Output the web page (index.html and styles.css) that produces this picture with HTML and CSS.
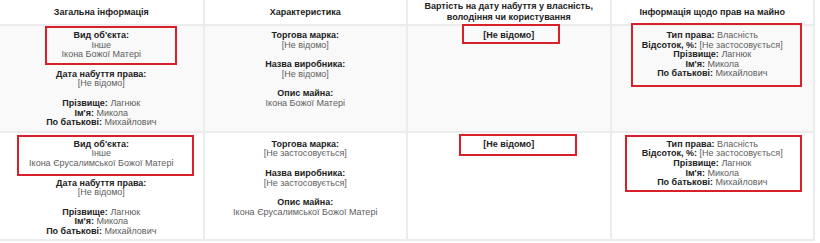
FILE: index.html
```html
<!DOCTYPE html>
<html lang="uk">
<head>
<meta charset="utf-8">
<title>Об'єкти</title>
<link rel="stylesheet" href="styles.css">
</head>
<body>
<div class="page">
  <table class="decl">
    <thead>
      <tr>
        <th>Загальна інформація</th>
        <th>Характеристика</th>
        <th>Вартість на дату набуття у власність,<br>володіння чи користування</th>
        <th>Інформація щодо прав на майно</th>
      </tr>
    </thead>
    <tbody>
      <tr class="row-a">
        <td>
          <div class="blk"><b>Вид об'єкта:</b><br><span class="v">Інше</span><br><span class="v">Ікона Божої Матері</span></div>
          <div class="blk"><b>Дата набуття права:</b><br><span class="v">[Не відомо]</span></div>
          <div class="blk"><b>Прізвище:</b> <span class="v">Лагнюк</span><br><b>Ім'я:</b> <span class="v">Микола</span><br><b>По батькові:</b> <span class="v">Михайлович</span></div>
        </td>
        <td>
          <div class="blk"><b>Торгова марка:</b><br><span class="v">[Не відомо]</span></div>
          <div class="blk"><b>Назва виробника:</b><br><span class="v">[Не відомо]</span></div>
          <div class="blk"><b>Опис майна:</b><br><span class="v">Ікона Божої Матері</span></div>
        </td>
        <td>
          <div class="blk"><b>[Не відомо]</b></div>
        </td>
        <td>
          <div class="blk"><b>Тип права:</b> <span class="v">Власність</span><br><b>Відсоток, %:</b> <span class="v">[Не застосовується]</span><br><b>Прізвище:</b> <span class="v">Лагнюк</span><br><b>Ім'я:</b> <span class="v">Микола</span><br><b>По батькові:</b> <span class="v">Михайлович</span></div>
        </td>
      </tr>
      <tr class="row-b">
        <td>
          <div class="blk"><b>Вид об'єкта:</b><br><span class="v">Інше</span><br><span class="v">Ікона Єрусалимської Божої Матері</span></div>
          <div class="blk"><b>Дата набуття права:</b><br><span class="v">[Не відомо]</span></div>
          <div class="blk"><b>Прізвище:</b> <span class="v">Лагнюк</span><br><b>Ім'я:</b> <span class="v">Микола</span><br><b>По батькові:</b> <span class="v">Михайлович</span></div>
        </td>
        <td>
          <div class="blk"><b>Торгова марка:</b><br><span class="v">[Не застосовується]</span></div>
          <div class="blk"><b>Назва виробника:</b><br><span class="v">[Не застосовується]</span></div>
          <div class="blk"><b>Опис майна:</b><br><span class="v">Ікона Єрусалимської Божої Матері</span></div>
        </td>
        <td>
          <div class="blk"><b>[Не відомо]</b></div>
        </td>
        <td>
          <div class="blk"><b>Тип права:</b> <span class="v">Власність</span><br><b>Відсоток, %:</b> <span class="v">[Не застосовується]</span><br><b>Прізвище:</b> <span class="v">Лагнюк</span><br><b>Ім'я:</b> <span class="v">Микола</span><br><b>По батькові:</b> <span class="v">Михайлович</span></div>
        </td>
      </tr>
    </tbody>
  </table>
  <div class="mark mark-1"></div>
  <div class="mark mark-2"></div>
  <div class="mark mark-3"></div>
  <div class="mark mark-4"></div>
  <div class="mark mark-5"></div>
  <div class="mark mark-6"></div>
</div>
</body>
</html>
```
FILE: styles.css
```css
html, body {
  margin: 0;
  padding: 0;
  background: #ffffff;
}

.page {
  position: relative;
  width: 820px;
  height: 243px;
  overflow: hidden;
  font-family: "Liberation Sans", Arial, sans-serif;
  color: #222222;
}

.decl {
  width: 815px;
  border-collapse: collapse;
  table-layout: fixed;
  font-size: 9px;
  line-height: 9.6px;
}

.decl th,
.decl td {
  border: 2px solid #ececec;
  text-align: center;
  vertical-align: top;
  padding: 0 4px;
}

.decl tr > :first-child {
  border-left: none;
}

.decl th {
  border-top: none;
  height: 22px;
  padding: 1px 4px;
  vertical-align: middle;
  font-weight: bold;
  line-height: 11px;
  background: #ffffff;
}

.row-a td {
  background: #f9f9f9;
  padding-top: 5px;
  padding-bottom: 3px;
}

.row-b td {
  background: #ffffff;
  padding-top: 7px;
  padding-bottom: 2px;
}

.blk {
  margin-bottom: 10px;
}

.blk:last-child {
  margin-bottom: 0;
}

.decl b {
  font-weight: bold;
  color: #222222;
}

.v {
  color: #606060;
}

.mark {
  position: absolute;
  border: 2px solid #d9202a;
  box-sizing: border-box;
}

.mark-1 { left: 45px;  top: 26px;  width: 132px; height: 39px; }
.mark-2 { left: 462px; top: 24px;  width: 98px;  height: 20px; }
.mark-3 { left: 631px; top: 23px;  width: 171px; height: 64px; }
.mark-4 { left: 17px;  top: 135px; width: 177px; height: 41px; }
.mark-5 { left: 459px; top: 134px; width: 118px; height: 22px; }
.mark-6 { left: 625px; top: 135px; width: 177px; height: 57px; }
```
